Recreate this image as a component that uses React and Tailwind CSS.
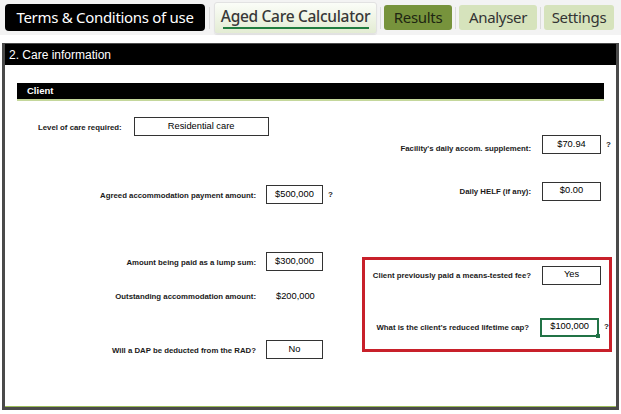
const tabFont = { fontFamily: '"Noto Sans", "Open Sans", sans-serif' }

function Sep() {
    return <div className="w-px h-[22px] bg-[#dcdcdc] mx-[3px]" />
}

function TabBar() {
    return (
        <div className="flex items-center h-[35px] bg-[#f3f3f3] pl-[5px]" style={tabFont}>
            <div className="w-[200px] h-[27px] bg-black rounded-[4px] text-white text-[15px] flex items-center justify-center tracking-[-0.3px]">
                Terms &amp; Conditions of use
            </div>
            <div className="w-px h-[22px] bg-[#dcdcdc] mx-[4px]" />
            <div className="w-[163px] h-[32px] rounded-[3px] border border-[#e2e2e2] bg-gradient-to-b from-[#fbfdf8] to-[#e3ecd3] flex flex-col items-center justify-center shadow-[0_1px_1px_rgba(0,0,0,0.08)]">
                <span className="text-[15.5px] leading-[20px] font-medium text-[#383838] tracking-[-0.3px]">
                    Aged Care Calculator
                </span>
                <span className="w-[146px] h-[2px] bg-[#1f7d3f] mt-[1px]" />
            </div>
            <Sep />
            <div className="w-[68px] h-[25px] rounded-[3px] bg-[#77933c] text-[15px] text-[#1e2612] flex items-center justify-center tracking-[-0.3px]">
                Results
            </div>
            <Sep />
            <div className="w-[78px] h-[25px] rounded-[3px] bg-[#d6e3bc] text-[15px] text-[#333] flex items-center justify-center tracking-[-0.3px]">
                Analyser
            </div>
            <Sep />
            <div className="w-[70px] h-[25px] rounded-[3px] bg-[#d6e3bc] text-[15px] text-[#333] flex items-center justify-center tracking-[-0.3px]">
                Settings
            </div>
        </div>
    )
}

function Box({ children, w = "w-[57px]", green }) {
    return (
        <div
            className={
                "relative h-[19px] flex items-center justify-center text-[9.3px] text-black bg-white " +
                w +
                (green ? " border-2 border-[#217346]" : " border border-[#333]")
            }
        >
            {children}
            {green && <span className="absolute -right-[3px] -bottom-[3px] w-[4px] h-[4px] bg-[#217346]" />}
        </div>
    )
}

function Q() {
    return <span className="ml-[5px] text-[8px] font-bold text-[#1a1a1a]">?</span>
}

function LeftRow({ label, value, q, mt }) {
    return (
        <div className={"flex items-center " + mt}>
            <div className="w-[251px] text-right text-[7.8px] font-bold text-[#1a1a1a] pt-[2px]">{label}</div>
            <div className="ml-[10px]">
                <Box>{value}</Box>
            </div>
            {q && <Q />}
        </div>
    )
}

function RightRow({ label, value, q, mt, lw = "w-[169px]", pt = "pt-[2px]", green }) {
    return (
        <div className={"flex items-center " + mt}>
            <div className={"text-right text-[7.8px] font-bold text-[#1a1a1a] " + lw + " " + pt}>{label}</div>
            <div className="ml-[11px]">
                <Box w="w-[59px]" green={green}>{value}</Box>
            </div>
            {q && <Q />}
        </div>
    )
}

export default function App() {
    return (
        <div className="w-[621px] h-[414px] bg-white overflow-hidden">
            <TabBar />
            <div
                className="mx-[2px] mt-[8px] h-[367px] border-[3px] border-t border-[#4a4a4a] flex flex-col"
                style={{ fontFamily: '"Liberation Sans", Arial, sans-serif' }}
            >
                <div className="h-[21px] bg-black text-white text-[12px] flex items-center pl-[4px]">
                    2. Care information
                </div>
                <div className="mt-[18px] mx-[12px] h-[18px] bg-black border-b-2 border-[#c4d79b] text-white text-[9.5px] font-bold flex items-center pl-[10px]">
                    Client
                </div>
                <div className="flex flex-1">
                    <div className="w-[357px] flex flex-col">
                        <div className="flex items-center mt-[16px] pl-[33px]">
                            <span className="text-[7.8px] font-bold text-[#1a1a1a] pt-[3px]">Level of care required:</span>
                            <div className="ml-[12px]">
                                <Box w="w-[135px]">Residential care</Box>
                            </div>
                        </div>
                        <LeftRow mt="mt-[49px]" label="Agreed accommodation payment amount:" value="$500,000" q />
                        <LeftRow mt="mt-[48px]" label="Amount being paid as a lump sum:" value="$300,000" />
                        <div className="flex items-center mt-[16px] h-[19px]">
                            <div className="w-[251px] text-right text-[7.8px] font-bold text-[#1a1a1a]">
                                Outstanding accommodation amount:
                            </div>
                            <div className="ml-[20px] text-[9.3px] text-black">$200,000</div>
                        </div>
                        <LeftRow mt="mt-[34px]" label="Will a DAP be deducted from the RAD?" value="No" />
                    </div>
                    <div className="w-[250px] flex flex-col">
                        <RightRow mt="mt-[34px]" pt="pt-[8px]" label="Facility's daily accom. supplement:" value="$70.94" q />
                        <RightRow mt="mt-[27px]" label="Daily HELF (if any):" value="$0.00" />
                        <div className="mt-[56px] h-[95px] border-[3px] border-[#c8202a] flex flex-col">
                            <RightRow mt="mt-[6px]" lw="w-[166px]" label="Client previously paid a means-tested fee?" value="Yes" />
                            <RightRow mt="mt-[33px]" lw="w-[166px]" label="What is the client’s reduced lifetime cap?" value="$100,000" q green />
                        </div>
                    </div>
                </div>
                <div className="h-px bg-[#9bbb59]" />
            </div>
        </div>
    )
}
